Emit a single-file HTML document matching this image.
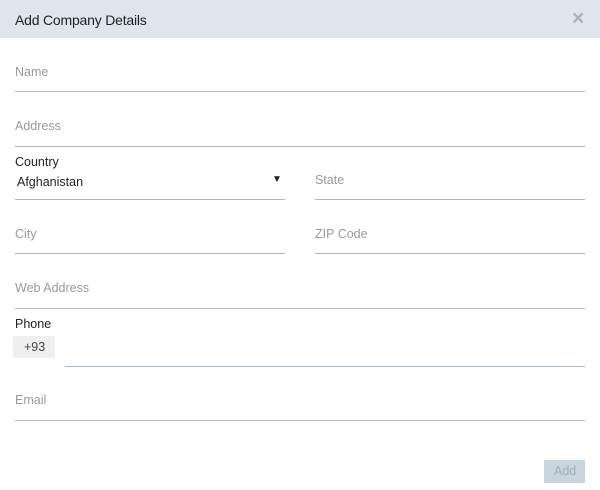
<!DOCTYPE html>
<html><head><style>
body{margin:0;width:600px;height:490px;background:#fff;font-family:"Liberation Sans",sans-serif;position:relative;overflow:hidden}
.hdr{position:absolute;left:0;top:0;width:600px;height:38px;background:#dfe5ed}
.t{position:absolute;white-space:nowrap;font-size:12.5px}
.ph{color:#9a9a9a}
.dk{color:#222}
.ln{position:absolute;left:0;height:1px;background:#a8bac8}
</style></head><body>
<div class="hdr"></div>
<div class="t dk" style="left:15px;top:12px;font-size:14px;letter-spacing:-0.2px">Add Company Details</div>
<div class="t" style="left:572px;top:7px;font-size:21px;font-weight:bold;color:#b0b0b0">×</div>

<div class="t ph" style="left:15px;top:65px">Name</div>
<div class="ln" style="left:15px;top:91px;width:570px"></div>

<div class="t ph" style="left:15px;top:119px">Address</div>
<div class="ln" style="left:15px;top:146px;width:570px"></div>

<div class="t dk" style="left:15px;top:155px">Country</div>
<div class="t dk" style="left:17px;top:175px">Afghanistan</div>
<div class="t dk" style="left:272px;top:174px;font-size:10px">▼</div>
<div class="ln" style="left:15px;top:199px;width:270px"></div>
<div class="t ph" style="left:315px;top:173px">State</div>
<div class="ln" style="left:315px;top:199px;width:270px"></div>

<div class="t ph" style="left:15px;top:227px">City</div>
<div class="ln" style="left:15px;top:253px;width:270px"></div>
<div class="t ph" style="left:315px;top:227px">ZIP Code</div>
<div class="ln" style="left:315px;top:253px;width:270px"></div>

<div class="t ph" style="left:15px;top:281px">Web Address</div>
<div class="ln" style="left:15px;top:308px;width:570px"></div>

<div class="t dk" style="left:15px;top:317px">Phone</div>
<div style="position:absolute;left:13px;top:336px;width:42px;height:22px;background:#efefef;border-radius:2px"></div>
<div class="t" style="left:24px;top:340px;color:#444">+93</div>
<div class="ln" style="left:65px;top:366px;width:520px"></div>

<div class="t ph" style="left:15px;top:393px">Email</div>
<div class="ln" style="left:15px;top:420px;width:570px"></div>

<div style="position:absolute;left:544px;top:460px;width:41px;height:23px;background:#c9d5de"></div>
<div class="t" style="left:554px;top:464px;color:#9eadb8">Add</div>
</body></html>
